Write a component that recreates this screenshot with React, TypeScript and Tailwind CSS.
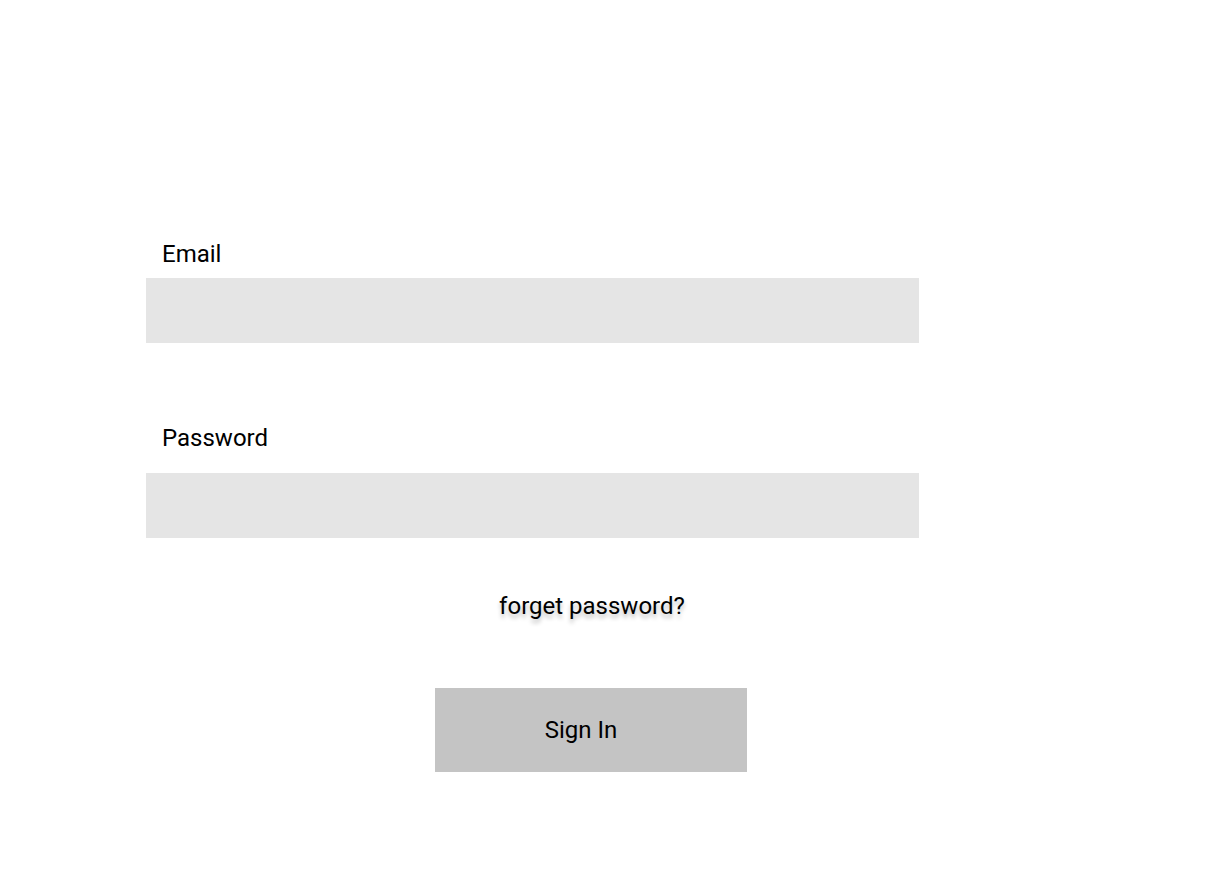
export default function App() {
  return (
    <div className="min-h-screen bg-white font-['Roboto','Liberation_Sans',sans-serif] text-black">
      <div className="pt-[240px] pl-[146px] w-[919px]">
        {/* Email */}
        <label className="block pl-4 text-[24px] leading-[28px]">Email</label>
        <div className="mt-[10px] h-[65px] bg-[#e5e5e5]" />

        {/* Password */}
        <label className="mt-[81px] block pl-4 text-[24px] leading-[28px]">Password</label>
        <div className="mt-[21px] h-[65px] bg-[#e5e5e5]" />
      </div>

      <div className="w-[1182px] flex flex-col items-center">
        <button className="mt-[54px] pl-[2px] text-[24px] leading-[28px] [text-shadow:0_4px_4px_rgba(0,0,0,0.25)]">
          forget password?
        </button>
        <button className="mt-[68px] w-[312px] h-[84px] bg-[#c4c4c4] pr-5 text-[24px] leading-[28px]">
          Sign In
        </button>
      </div>
    </div>
  );
}
